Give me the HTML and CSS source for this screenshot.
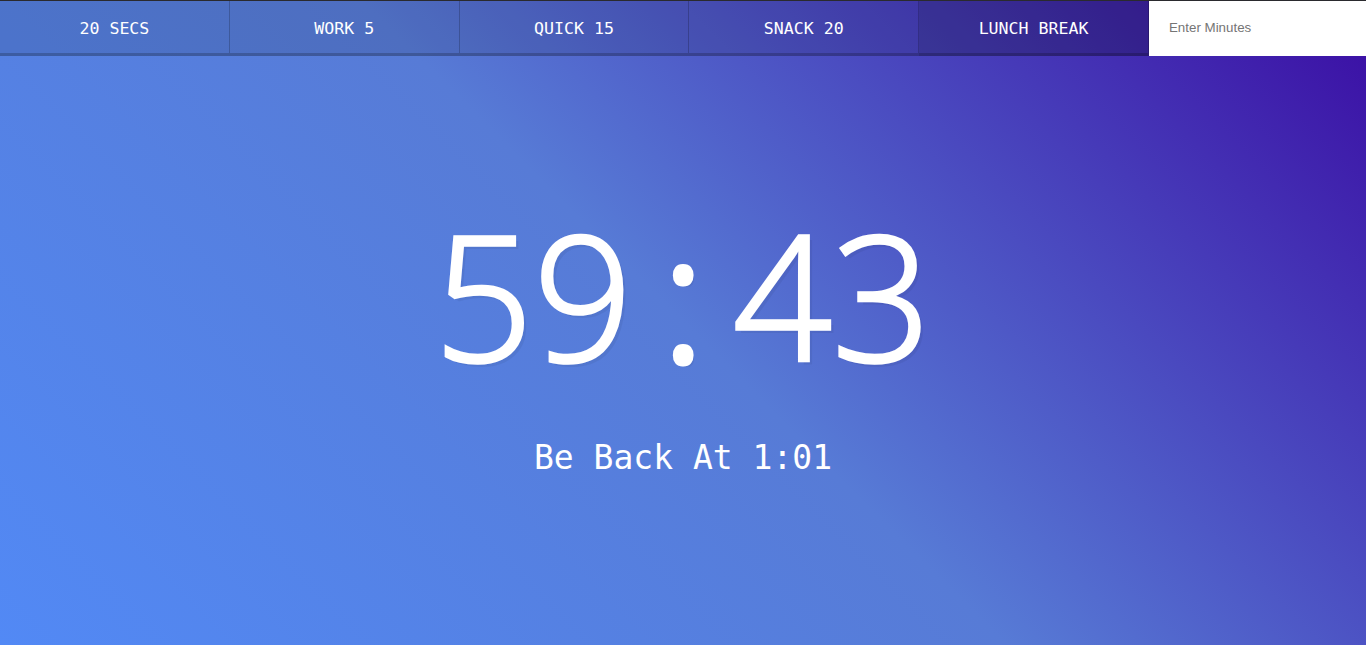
FILE: index.html
```html
<!DOCTYPE html>
<html lang="en">
<head>
<meta charset="UTF-8">
<title>Countdown Timer</title>
<link rel="stylesheet" href="styles.css">
</head>
<body>
<div class="timer">
  <div class="timer__controls">
    <button class="timer__button">20 Secs</button>
    <button class="timer__button">Work 5</button>
    <button class="timer__button">Quick 15</button>
    <button class="timer__button">Snack 20</button>
    <button class="timer__button timer__button--active">Lunch Break</button>
    <form class="timer__form" name="customForm">
      <input class="timer__input" type="text" name="minutes" placeholder="Enter Minutes">
    </form>
  </div>
  <div class="display">
    <h1 class="display__time-left">59<span class="display__colon">:</span>43</h1>
    <p class="display__end-time">Be Back At 1:01</p>
  </div>
</div>
</body>
</html>
```
FILE: styles.css
```css
html {
  box-sizing: border-box;
  font-size: 10px;
  background: linear-gradient(45deg, #5289f5 0%, #577bd6 50%, #3a0ca3 100%);
  min-height: 100%;
}

*, *::before, *::after {
  box-sizing: inherit;
}

body {
  margin: 0;
  text-align: center;
  font-family: "DejaVu Sans Mono", "Liberation Mono", monospace;
}

.timer {
  display: flex;
  min-height: 100vh;
  flex-direction: column;
}

.timer__controls {
  display: flex;
  border-top: 1px solid #2a2a2e;
}

.timer__controls > * {
  flex: 1;
}

.timer__form {
  flex: 1;
  display: flex;
  margin: 0;
}

.timer__input {
  flex: 1;
  min-width: 0;
  border: 0;
  padding: 19px 20px 21px;
  font-family: "Liberation Sans", Arial, sans-serif;
  font-size: 13.3333px;
  background: #fff;
}

.timer__input::placeholder {
  color: #757575;
}

.timer__button {
  cursor: pointer;
  color: #fff;
  font-size: 16.6px;
  text-transform: uppercase;
  background: rgba(0, 0, 0, 0.1);
  border: 0;
  border-bottom: 3px solid rgba(0, 0, 0, 0.2);
  border-right: 1px solid rgba(0, 0, 0, 0.2);
  padding: 11px 10px 9px;
  font-family: "DejaVu Sans Mono", "Liberation Mono", monospace;
}

.timer__button--active {
  background: rgba(0, 0, 0, 0.2);
}

.display {
  flex: 1;
  display: flex;
  flex-direction: column;
  align-items: center;
  justify-content: center;
}

.display__time-left {
  font-family: "Open Sans", "DejaVu Sans", sans-serif;
  font-weight: 300;
  font-size: 173px;
  line-height: 200px;
  letter-spacing: 0.6px;
  font-variant-numeric: tabular-nums;
  -webkit-text-stroke: 3.5px #fff;
  margin: 0;
  color: #fff;
  text-shadow: 4px 4px 0 rgba(0, 0, 0, 0.05);
  white-space: nowrap;
}

.display__colon {
  display: inline-block;
  width: 100px;
  letter-spacing: 0;
  text-align: center;
  -webkit-text-stroke: 7px #fff;
}

.display__end-time {
  font-size: 33px;
  line-height: 40px;
  color: #fff;
  margin: 44px 0 30px;
}
```
